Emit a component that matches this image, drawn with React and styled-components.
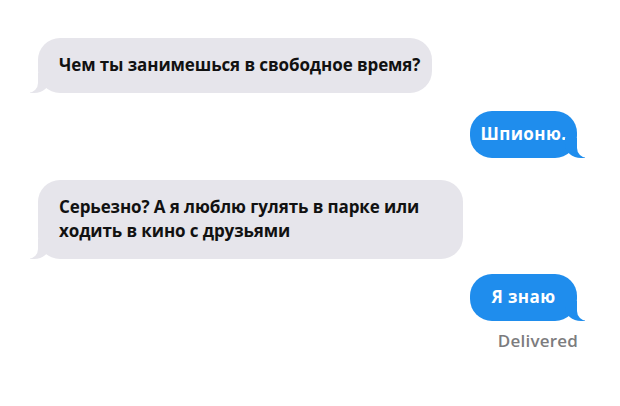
import React from "react";
import styled, { createGlobalStyle, css } from "styled-components";

const GlobalStyle = createGlobalStyle`
  html, body {
    margin: 0;
    padding: 0;
    background: #fff;
  }
  body {
    font-family: "Open Sans", "Liberation Sans", sans-serif;
  }
`;

const GREY = "#e6e5eb";
const BLUE = "#1f8ded";

const Thread = styled.div`
  width: 620px;
  height: 406px;
  box-sizing: border-box;
  padding: 38px 43px 0 38px;
  display: flex;
  flex-direction: column;
  background: #fff;
  overflow: hidden;
`;

const Bubble = styled.div`
  position: relative;
  box-sizing: border-box;
  border-radius: 22px;
  font-weight: 700;
  margin-top: ${(p) => p.$gap || 0}px;

  ${(p) =>
    p.$sent
      ? css`
          align-self: flex-end;
          width: 107px;
          text-align: center;
          background: ${BLUE};
          color: #fff;
          font-size: 17px;
          letter-spacing: 0.4px;
          line-height: 22px;
          padding: 12px 0 13px;

          &::before {
            content: "";
            position: absolute;
            bottom: 0;
            right: -8px;
            width: 20px;
            height: 20px;
            background: ${BLUE};
            border-bottom-left-radius: 16px 14px;
          }
          &::after {
            content: "";
            position: absolute;
            bottom: 0;
            right: -10px;
            width: 10px;
            height: 22px;
            background: #fff;
            border-bottom-left-radius: 10px;
          }
        `
      : css`
          align-self: flex-start;
          background: ${GREY};
          color: #111;
          font-size: 17px;
          letter-spacing: -0.1px;
          line-height: 24px;
          padding: 15px ${p.$padRight || 12}px 16px 21px;

          &::before {
            content: "";
            position: absolute;
            bottom: 0;
            left: -8px;
            width: 20px;
            height: 20px;
            background: ${GREY};
            border-bottom-right-radius: 16px 14px;
          }
          &::after {
            content: "";
            position: absolute;
            bottom: 0;
            left: -10px;
            width: 10px;
            height: 22px;
            background: #fff;
            border-bottom-right-radius: 10px;
          }
        `}
`;

const Status = styled.div`
  align-self: flex-end;
  margin-top: 8px;
  margin-right: -1px;
  font-size: 17px;
  font-weight: 600;
  letter-spacing: 0.2px;
  color: #7c7c7e;
`;

export default function App() {
  return (
    <>
      <GlobalStyle />
      <Thread>
        <Bubble>Чем ты занимешься в свободное время?</Bubble>
        <Bubble $sent $gap={18}>
          Шпионю.
        </Bubble>
        <Bubble $gap={22} $padRight={44}>
          Серьезно? А я люблю гулять в парке или
          <br />
          ходить в кино с друзьями
        </Bubble>
        <Bubble $sent $gap={15}>
          Я знаю
        </Bubble>
        <Status>Delivered</Status>
      </Thread>
    </>
  );
}
